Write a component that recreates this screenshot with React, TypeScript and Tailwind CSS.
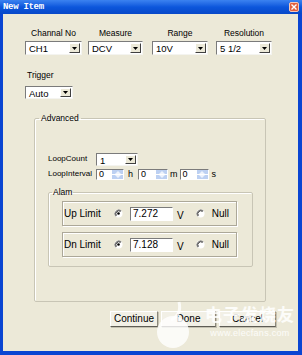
import React from 'react';

const DropArrow: React.FC = () => (
  <div className="w-[11px] h-full bg-[#ece9d8] border-t border-l border-t-white border-l-white border-r border-b border-r-[#404040] border-b-[#404040] flex items-center justify-center">
    <svg width="5" height="3" viewBox="0 0 5 3">
      <path d="M0 0h5L2.5 3z" fill="#000" />
    </svg>
  </div>
);

const Combo: React.FC<{ value: string; w: string; h?: string }> = ({ value, w, h = 'h-[14px]' }) => (
  <div className={`${w} ${h} bg-white border-t border-l border-[#7b7b7b] border-b border-r border-b-[#f4f4f0] border-r-[#f4f4f0] flex items-stretch p-[1px]`}>
    <span className="flex-1 pl-[2px] text-[9.5px] leading-[11px] text-black">{value}</span>
    <DropArrow />
  </div>
);

const Spin: React.FC<{ w: string }> = ({ w }) => (
  <div className={`${w} h-[11px] bg-white border-t border-l border-[#7b7b7b] border-b border-r border-b-white border-r-white flex items-stretch`}>
    <span className="flex-1 pl-[2px] text-[9px] leading-[9px] text-black">0</span>
    <div className="w-[11px] bg-[#bcd0f2] flex flex-col items-center justify-between py-[1px]">
      <svg width="6" height="3" viewBox="0 0 6 3"><path d="M0 3L3 0l3 3z" fill="#eef3fc" /></svg>
      <div className="w-full h-px bg-white" />
      <svg width="6" height="3" viewBox="0 0 6 3"><path d="M0 0h6L3 3z" fill="#eef3fc" /></svg>
    </div>
  </div>
);

const Radio: React.FC<{ on?: boolean }> = ({ on }) => (
  <svg width="9" height="9" viewBox="0 0 9 9" className="shrink-0">
    <circle cx="4.5" cy="4.5" r="4" fill="#fff" />
    <path d="M1.7 7.3A4 4 0 0 1 7.3 1.7" fill="none" stroke="#808080" strokeWidth="1" />
    <path d="M2.4 6.6A3 3 0 0 1 6.6 2.4" fill="none" stroke="#303030" strokeWidth="1" />
    {on && <circle cx="4.5" cy="4.5" r="1.3" fill="#000" />}
  </svg>
);

const LimitRow: React.FC<{ label: string; value: string }> = ({ label, value }) => (
  <div className="w-[175px] h-[25px] border border-[#aca899] shadow-[inset_1px_1px_0_#fff,1px_1px_0_#fff] flex items-center pl-[1px] text-[10px] text-black">
    <span className="w-[50px] leading-[12px]">{label}</span>
    <Radio on />
    <div className="ml-[7px] w-[43px] h-[14px] bg-white border-t border-l border-[#7b7b7b] border-b border-r border-b-white border-r-white pl-[2px] leading-[12px]">
      {value}
    </div>
    <span className="ml-[4px] mt-[5px] leading-[12px]">V</span>
    <span className="ml-[12px] flex"><Radio /></span>
    <span className="ml-[7px] leading-[12px]">Null</span>
  </div>
);

const Btn: React.FC<{ label: string; w: string }> = ({ label, w }) => (
  <div className={`${w} h-[16px] bg-[#f2f0e6] border border-t-white border-l-white border-r-[#8a877a] border-b-[#5e5c54] shadow-[1px_1px_0_#c4c1b2] flex items-center justify-center text-[10px] leading-[12px] text-black`}>
    {label}
  </div>
);

const App: React.FC = () => {
  return (
    <div className="w-[302px] h-[355px] bg-[#0a45d2] flex flex-col overflow-hidden font-['Liberation_Sans',Arial,sans-serif]">
      {/* Title bar */}
      <div className="h-[14px] bg-gradient-to-b from-[#3b82f0] via-[#0c56dc] to-[#0848c8] flex items-center pl-[3px] pr-[3px]">
        <span className="font-['Liberation_Mono',monospace] font-bold text-[9px] leading-[10px] text-white tracking-[-0.3px]">New Item</span>
        <div className="ml-auto w-[10px] h-[10px] rounded-[2px] bg-[#e2603e] border border-[#f6c8b8] flex items-center justify-center">
          <svg width="6" height="6" viewBox="0 0 6 6">
            <path d="M0.5 0.5l5 5M5.5 0.5l-5 5" stroke="#fff" strokeWidth="1.4" />
          </svg>
        </div>
      </div>

      {/* Body */}
      <div className="relative flex-1 bg-[#ece9d8] ml-[3px] mr-[4px] mb-[4px] text-black">
        {/* Top combos */}
        <div className="flex pl-[22px] pt-[14px] text-[8.5px] leading-[10px]">
          <div className="flex flex-col items-center">
            <span>Channal No</span>
            <div className="mt-[3px]"><Combo value="CH1" w="w-[57px]" /></div>
          </div>
          <div className="flex flex-col items-center ml-[6px]">
            <span>Measure</span>
            <div className="mt-[3px]"><Combo value="DCV" w="w-[55px]" /></div>
          </div>
          <div className="flex flex-col items-center ml-[9px]">
            <span>Range</span>
            <div className="mt-[3px]"><Combo value="10V" w="w-[56px]" /></div>
          </div>
          <div className="flex flex-col items-center ml-[8px]">
            <span>Resolution</span>
            <div className="mt-[3px]"><Combo value="5 1/2" w="w-[56px]" /></div>
          </div>
        </div>

        {/* Trigger */}
        <div className="flex flex-col pl-[22px] mt-[15px] text-[8.5px] leading-[10px]">
          <span className="pl-[2px]">Trigger</span>
          <div className="mt-[6px]"><Combo value="Auto" w="w-[48px]" h="h-[13px]" /></div>
        </div>

        {/* Advanced */}
        <fieldset className="ml-[31px] mt-[14px] w-[232px] border border-[#c8c5b5] rounded-[2px] shadow-[inset_1px_1px_0_#fff]">
          <legend className="ml-[4px] px-[2px] text-[8.5px] leading-[10px]">Advanced</legend>
          <div className="pt-[29px] pl-[13px] pb-[34px] text-[8px] leading-[10px]">
            <div className="flex items-center h-[14px]">
              <span className="w-[48px]">LoopCount</span>
              <Combo value="1" w="w-[42px]" h="h-[13px]" />
            </div>
            <div className="flex items-center h-[14px] mt-[1px]">
              <span className="w-[48px]">LoopInterval</span>
              <Spin w="w-[28px]" />
              <span className="ml-[4px] text-[9px]">h</span>
              <span className="ml-[5px]"><Spin w="w-[30px]" /></span>
              <span className="ml-[2px] text-[9px]">m</span>
              <span className="ml-[2px]"><Spin w="w-[29px]" /></span>
              <span className="ml-[3px] text-[9px]">s</span>
            </div>

            {/* Alam */}
            <fieldset className="mt-[6px] w-[205px] border border-[#c8c5b5] rounded-[2px] shadow-[inset_1px_1px_0_#fff]">
              <legend className="ml-[3px] px-[1px] text-[8.5px] leading-[10px]">Alam</legend>
              <div className="pl-[13px] pt-[4px] pb-[9px] flex flex-col gap-[6px]">
                <LimitRow label="Up Limit" value="7.272" />
                <LimitRow label="Dn Limit" value="7.128" />
              </div>
            </fieldset>
          </div>
        </fieldset>

        {/* Buttons */}
        <div className="flex pl-[107px] mt-[9px] gap-[3px]">
          <Btn label="Continue" w="w-[48px]" />
          <Btn label="Done" w="w-[55px]" />
          <Btn label="Cancel" w="w-[57px]" />
        </div>

        {/* Watermark overlay */}
        <div className="absolute left-[152px] top-[286px] w-[40px] h-[50px] pointer-events-none">
          <svg width="40" height="50" viewBox="0 0 40 50">
            <circle cx="18" cy="32" r="16" fill="#fff" fillOpacity="0.8" />
            <path d="M24 2c2 8 0 14-8 18" stroke="#fff" strokeOpacity="0.8" strokeWidth="3" fill="none" />
          </svg>
        </div>
        <div className="absolute left-[202px] top-[289px] flex flex-col items-center pointer-events-none text-white/85">
          <span className="font-['Noto_Sans_CJK_SC',sans-serif] font-bold text-[17px] leading-[22px] tracking-[1px]">电子发烧友</span>
          <span className="text-[9px] leading-[11px] mt-[3px] tracking-[0.3px]">www.elecfans.com</span>
        </div>
      </div>
    </div>
  );
};

export default App;
